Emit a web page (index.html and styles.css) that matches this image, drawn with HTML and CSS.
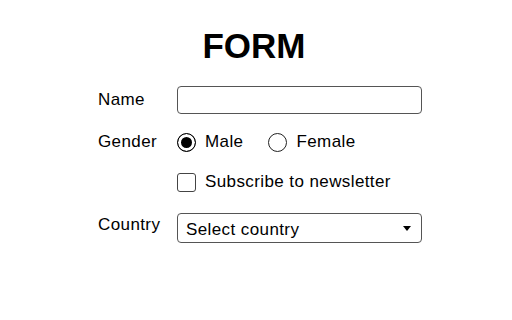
FILE: index.html
```html
<!DOCTYPE html>
<html>
    <head>
        <meta name="viewport" content="width=device-width, initial-scale=1.0">
        <title>Form</title>
        <link rel="stylesheet" href="styles.css">
    </head>
    <body>
        <h1 class="title">FORM</h1>
        <form class="form">
            <div class="row row-name">
                <label class="label" for="name">Name</label>
                <input class="text-input" type="text" id="name">
            </div>
            <div class="row row-gender">
                <span class="label">Gender</span>
                <label class="option option-male">
                    <input class="radio" type="radio" name="gender" checked>
                    Male
                </label>
                <label class="option">
                    <input class="radio" type="radio" name="gender">
                    Female
                </label>
            </div>
            <div class="row row-news">
                <span class="label"></span>
                <label class="option">
                    <input class="checkbox" type="checkbox">
                    Subscribe to newsletter
                </label>
            </div>
            <div class="row row-country">
                <label class="label label-country" for="country">Country</label>
                <div class="select-wrap">
                    <select class="select" id="country">
                        <option>Select country</option>
                    </select>
                </div>
            </div>
        </form>
    </body>
</html>
```

FILE: styles.css
```css
*{
    padding: 0;
    margin: 0;
    box-sizing: border-box;
}
body {
    font-family: "Liberation Sans", Arial, sans-serif;
    font-size: 17px;
    letter-spacing: 0.4px;
    color: #000;
    background: #fff;
}
.title {
    margin-top: 26px;
    padding-right: 4px;
    font-size: 35px;
    line-height: 40px;
    letter-spacing: 0;
    font-weight: bold;
    text-align: center;
}
.form {
    padding-left: 98px;
    margin-top: 20px;
}
.row {
    display: flex;
    align-items: center;
}
.label {
    width: 79px;
    flex-shrink: 0;
}
.row-gender { margin-top: 18px; height: 20px; }
.row-news { margin-top: 20px; height: 20px; }
.row-country { margin-top: 21px; align-items: flex-start; }
.label-country { padding-top: 2px; }

.text-input {
    width: 245px;
    height: 28px;
    border: 1px solid #555;
    border-radius: 4px;
    font: inherit;
}
.option {
    display: flex;
    align-items: center;
    gap: 9px;
}
.option-male { margin-right: 25px; }
.radio {
    appearance: none;
    width: 19px;
    height: 19px;
    border: 1px solid #222;
    border-radius: 50%;
    margin: 0;
}
.radio:checked {
    background: #000;
    box-shadow: inset 0 0 0 3px #fff;
    border-color: #000;
}
.checkbox {
    appearance: none;
    width: 19px;
    height: 19px;
    border: 1px solid #444;
    border-radius: 3px;
    margin: 0;
}
.select-wrap {
    position: relative;
    width: 245px;
}
.select-wrap::after {
    content: "";
    position: absolute;
    right: 11px;
    top: 13px;
    border-left: 4px solid transparent;
    border-right: 4px solid transparent;
    border-top: 5px solid #000;
}
.select {
    appearance: none;
    width: 100%;
    height: 30px;
    padding: 2px 8px 0 8px;
    border: 1px solid #555;
    border-radius: 4px;
    background: #fff;
    color: #000;
    font: inherit;
    letter-spacing: inherit;
}
```
